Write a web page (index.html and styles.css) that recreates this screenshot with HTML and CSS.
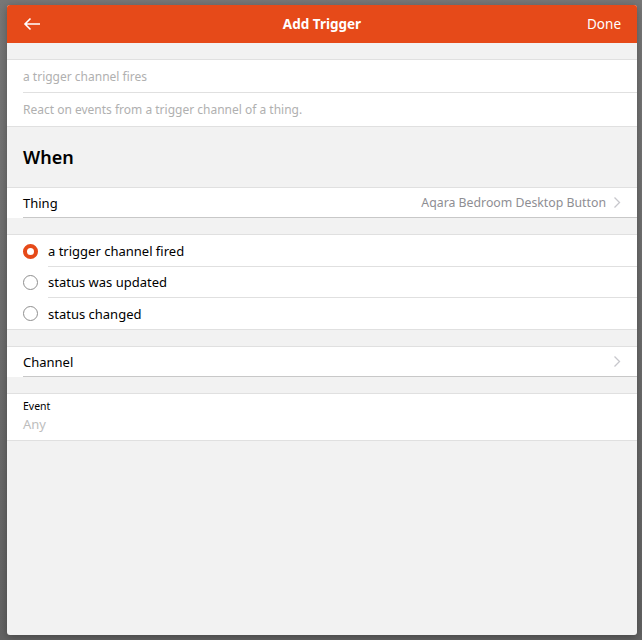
FILE: index.html
```html
<!DOCTYPE html>
<html>
<head>
<meta charset="utf-8">
<link rel="stylesheet" href="styles.css">
</head>
<body>
<div class="modal">
  <div class="navbar">
    <div class="nav-left">
      <svg width="18" height="14" viewBox="0 0 18 14"><path d="M17 7H2M7.5 1.5L2 7l5.5 5.5" fill="none" stroke="#fff" stroke-width="1.6"/></svg>
    </div>
    <div class="nav-title">Add Trigger</div>
    <div class="nav-right">Done</div>
  </div>
  <div class="gap"></div>
  <div class="list">
    <div class="item"><div class="item-inner muted">a trigger channel fires</div></div>
    <div class="item"><div class="item-inner muted last">React on events from a trigger channel of a thing.</div></div>
  </div>
  <div class="block-title">When</div>
  <div class="list">
    <div class="item"><div class="item-inner link last-line">
      <span class="label">Thing</span>
      <span class="after">Aqara Bedroom Desktop Button</span>
      <svg class="chev" width="8" height="13" viewBox="0 0 8 13"><path d="M1.5 1.5l5 5-5 5" fill="none" stroke="#c7c7cc" stroke-width="1.3"/></svg>
    </div></div>
  </div>
  <div class="gap"></div>
  <div class="list">
    <div class="radio-item"><span class="radio on"></span><div class="radio-inner first">a trigger channel fired</div></div>
    <div class="radio-item"><span class="radio"></span><div class="radio-inner">status was updated</div></div>
    <div class="radio-item"><span class="radio"></span><div class="radio-inner last">status changed</div></div>
  </div>
  <div class="gap"></div>
  <div class="list">
    <div class="item"><div class="item-inner link last-line">
      <span class="label">Channel</span>
      <span class="after"></span>
      <svg class="chev" width="8" height="13" viewBox="0 0 8 13"><path d="M1.5 1.5l5 5-5 5" fill="none" stroke="#c7c7cc" stroke-width="1.3"/></svg>
    </div></div>
  </div>
  <div class="gap"></div>
  <div class="list">
    <div class="input-item">
      <div class="input-label">Event</div>
      <div class="input-value">Any</div>
    </div>
  </div>
</div>
</body>
</html>
```

FILE: styles.css
```css
html, body {
  margin: 0;
  padding: 0;
}
body {
  background: linear-gradient(#777777, #636363);
  height: 640px;
  overflow: hidden;
  font-family: "Noto Sans", "Open Sans", sans-serif;
}
.modal {
  margin: 5px 0 0 7px;
  width: 630px;
  height: 630px;
  background: #f2f2f2;
  border-radius: 3px;
  overflow: hidden;
  box-shadow: 0 2px 8px rgba(0,0,0,0.3);
}
.navbar {
  height: 38px;
  background: #e64a19;
  color: #fff;
  display: flex;
  align-items: center;
  padding: 0 16px;
}
.nav-left {
  width: 60px;
  display: flex;
  align-items: center;
}
.nav-title {
  flex: 1;
  text-align: center;
  font-weight: bold;
  font-size: 13.5px;
}
.nav-right {
  width: 60px;
  text-align: right;
  font-size: 13.5px;
}
.gap {
  height: 16px;
}
.list {
  background: #fff;
  border-top: 1px solid #e0e0e0;
  border-bottom: 1px solid #e0e0e0;
}
.item {
  padding-left: 16px;
}
.item-inner {
  height: 32px;
  display: flex;
  align-items: center;
  border-bottom: 1px solid #e0e0e0;
  font-size: 13px;
  padding-right: 16px;
}
.item-inner.last {
  border-bottom: none;
  height: 33px;
}
.item-inner.last-line {
  border-bottom: 1px solid #c8c8c8;
  height: 29px;
}
.list:has(.last-line) {
  border-bottom: none;
}
.muted {
  color: #b0b0b0;
  font-size: 12px;
}
.label {
  color: #000;
  flex: 1;
}
.after {
  color: #8e8e93;
  font-size: 12.3px;
}
.chev {
  margin-left: 7px;
}
.block-title {
  height: 60px;
  display: flex;
  align-items: center;
  padding-left: 16px;
  font-size: 18px;
  font-weight: 600;
  color: #000;
}
.radio-item {
  display: flex;
  align-items: center;
  padding-left: 16px;
}
.radio {
  width: 13px;
  height: 13px;
  border: 1.5px solid #8f8f8f;
  border-radius: 50%;
  margin-right: 10px;
  box-sizing: content-box;
  flex: none;
}
.radio.on {
  border: 4.5px solid #e64a19;
  width: 7px;
  height: 7px;
}
.radio-inner {
  flex: 1;
  height: 30px;
  display: flex;
  align-items: center;
  border-bottom: 1px solid #e0e0e0;
  font-size: 13px;
  color: #000;
}
.radio-inner.first {
  height: 31px;
}
.radio-inner.last {
  border-bottom: none;
  height: 31px;
}
.input-item {
  padding: 5px 16px 6px;
  height: 35px;
}
.input-label {
  font-size: 10.5px;
  color: #000;
  line-height: 14px;
}
.input-value {
  font-size: 13px;
  color: #bdbdbd;
  line-height: 22px;
}
```
